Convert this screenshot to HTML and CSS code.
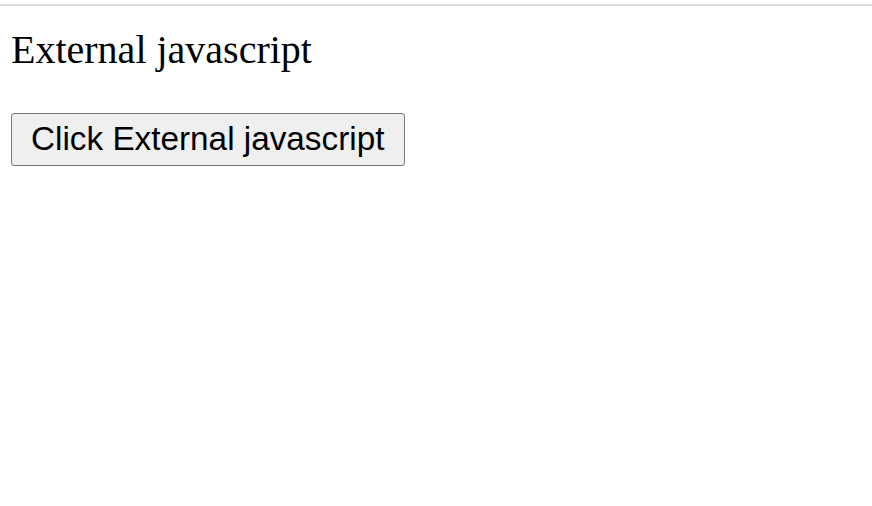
FILE: index.html
```html
<!DOCTYPE html>
<html>
<head>
<meta charset="utf-8">
<link rel="stylesheet" href="styles.css">
</head>
<body>
<div class="rule"></div>
<main class="content">
  <p class="title">External javascript</p>
  <button class="btn" type="button">Click External javascript</button>
</main>
</body>
</html>
```
FILE: styles.css
```css
html, body {
  margin: 0;
  padding: 0;
  background: #ffffff;
}
.rule {
  margin-top: 4px;
  height: 2px;
  background: #dcdcdc;
}
.content {
  padding: 21px 11px 0 11px;
  display: flex;
  flex-direction: column;
  align-items: flex-start;
}
.title {
  margin: 0;
  font-family: "Liberation Serif", "Times New Roman", serif;
  font-size: 40px;
  line-height: 46px;
  color: #000;
}
.btn {
  margin-top: 40px;
  font-family: "Liberation Sans", Arial, sans-serif;
  font-size: 33.3px;
  line-height: 38px;
  padding: 6px 20px 7px 19px;
  color: #000;
  background: #efefef;
  border: 1px solid #767676;
  border-radius: 3px;
}
```
